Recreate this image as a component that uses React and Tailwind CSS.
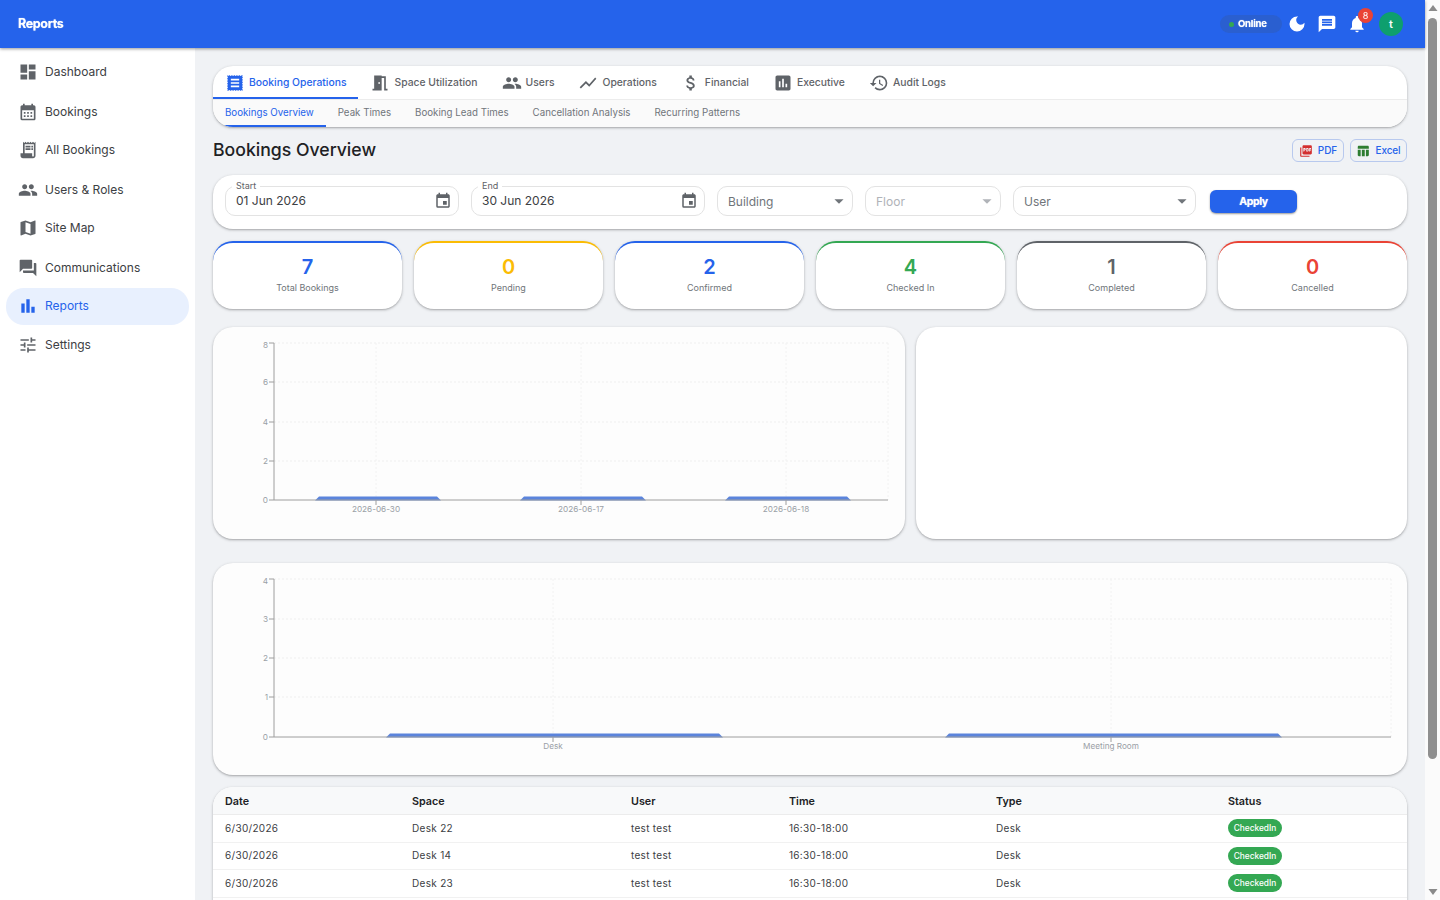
import React from 'react';
import {
  MdDashboard, MdCalendarMonth, MdReceiptLong, MdPeople, MdMap, MdForum, MdBarChart, MdTune,
  MdMeetingRoom, MdShowChart, MdAttachMoney, MdAssessment, MdHistory,
  MdPictureAsPdf, MdTableChart, MdEvent, MdArrowDropDown, MdDarkMode, MdMessage, MdNotifications,
} from 'react-icons/md';

const navItems = [
  { label: 'Dashboard', icon: MdDashboard, h: 'h-[38px]' },
  { label: 'Bookings', icon: MdCalendarMonth, h: 'h-[38px] mt-[2px]' },
  { label: 'All Bookings', icon: MdReceiptLong, h: 'h-[38px]' },
  { label: 'Users & Roles', icon: MdPeople, h: 'h-[38px] mt-[2px]' },
  { label: 'Site Map', icon: MdMap, h: 'h-[38px]' },
  { label: 'Communications', icon: MdForum, h: 'h-[38px] mt-[2px]' },
  { label: 'Reports', icon: MdBarChart, h: 'h-[37px] mt-[1px] pb-[1px]', active: true },
  { label: 'Settings', icon: MdTune, h: 'h-[38px] mt-[1px]' },
];

// filled sheet with three lines and a dotted edge
const SheetIcon = ({ size, className }) => (
  <svg width={size} height={size} viewBox="0 0 24 24" className={className} fill="currentColor">
    <path fillRule="evenodd" d="M3.5 3.5h17v17h-17z M7 7h10v2H7z M7 11h10v2H7z M7 15h10v2H7z" />
    <rect x="3" y="3" width="18" height="18" fill="none" stroke="currentColor" strokeWidth="1" strokeDasharray="1 1" />
  </svg>
);

const topTabs = [
  { label: 'Booking Operations', icon: SheetIcon, active: true },
  { label: 'Space Utilization', icon: MdMeetingRoom },
  { label: 'Users', icon: MdPeople },
  { label: 'Operations', icon: MdShowChart },
  { label: 'Financial', icon: MdAttachMoney },
  { label: 'Executive', icon: MdAssessment },
  { label: 'Audit Logs', icon: MdHistory },
];

const subTabs = ['Bookings Overview', 'Peak Times', 'Booking Lead Times', 'Cancellation Analysis', 'Recurring Patterns'];

const stats = [
  { value: 7, label: 'Total Bookings', border: 'border-t-[#2563eb]', text: 'text-[#2563eb]' },
  { value: 0, label: 'Pending', border: 'border-t-[#fbbc04]', text: 'text-[#fbbc04]' },
  { value: 2, label: 'Confirmed', border: 'border-t-[#2563eb]', text: 'text-[#2563eb]' },
  { value: 4, label: 'Checked In', border: 'border-t-[#34a853]', text: 'text-[#34a853]' },
  { value: 1, label: 'Completed', border: 'border-t-[#5f6368]', text: 'text-[#5f6368]' },
  { value: 0, label: 'Cancelled', border: 'border-t-[#ea4335]', text: 'text-[#ea4335]' },
];

const rows = [
  ['6/30/2026', 'Desk 22', 'test test', '16:30-18:00', 'Desk', 'CheckedIn'],
  ['6/30/2026', 'Desk 14', 'test test', '16:30-18:00', 'Desk', 'CheckedIn'],
  ['6/30/2026', 'Desk 23', 'test test', '16:30-18:00', 'Desk', 'CheckedIn'],
  ['6/30/2026', 'Desk 9', 'test test', '16:30-18:00', 'Desk', 'CheckedIn'],
  ['6/18/2026', 'Room 2', 'test test', '10:00-11:00', 'Meeting Room', 'Confirmed'],
  ['6/17/2026', 'Room 1', 'test test', '09:00-10:00', 'Meeting Room', 'Confirmed'],
  ['6/17/2026', 'Desk 5', 'test test', '09:00-17:00', 'Desk', 'Completed'],
];

const statusClass = {
  CheckedIn: 'bg-[#34a853]',
  Confirmed: 'bg-[#2563eb]',
  Completed: 'bg-[#5f6368]',
};

const Field = ({ label, value, className }) => (
  <div className={`relative h-[30px] rounded-[10px] border border-[#e3e3e3] flex items-center justify-between pl-[10px] pr-[6px] ${className}`}>
    <span className="absolute -top-[7px] left-[6px] bg-white px-[4px] text-[9px] leading-[11px] text-[#5f6368]">{label}</span>
    <span className="text-[12px] text-[#3c4043]">{value}</span>
    <MdEvent size={18} className="text-[#5f6368]" />
  </div>
);

const SelectBox = ({ label, className, muted }) => (
  <div className={`h-[30px] rounded-[10px] border border-[#e3e3e3] flex items-center justify-between pl-[10px] pr-[2px] ${className}`}>
    <span className={`pt-[1px] text-[12px] ${muted ? 'text-[#b0b3b8]' : 'text-[#70757a]'}`}>{label}</span>
    <MdArrowDropDown size={22} className={muted ? 'text-[#b0b3b8]' : 'text-[#70757a]'} />
  </div>
);

// recharts-like bar with the corners cut off
const Bar = ({ x, w, base }) => (
  <path d={`M${x} ${base + 0.5} L${x + 4} ${base - 3.5} H${x + w - 4} L${x + w} ${base + 0.5} Z`} fill="#5b84dc" />
);

const AxisText = ({ x, y, children, anchor = 'middle' }) => (
  <text x={x} y={y} textAnchor={anchor} fontSize="8.2" fill="#9aa0a6" fontFamily="Inter, sans-serif">{children}</text>
);

const TimeChart = () => {
  const ys = [[0, 173], [2, 134], [4, 95], [6, 55], [8, 16]];
  const xs = [[163, '2026-06-30', 102], [368, '2026-06-17', 307], [573, '2026-06-18', 512]];
  return (
    <svg width="692" height="212" className="block">
      {ys.slice(1).map(([v, y]) => (
        <line key={v} x1="61" x2="675" y1={y} y2={y} stroke="#efefef" strokeDasharray="2 2" />
      ))}
      {[163, 368, 573, 675].map((x) => (
        <line key={x} x1={x} x2={x} y1="16" y2="173" stroke="#f2f2f2" strokeDasharray="2 2" />
      ))}
      {xs.map(([x, , bx]) => <Bar key={x} x={bx} w={126} base={173} />)}
      <line x1="61" x2="61" y1="16" y2="173" stroke="#9e9e9e" />
      <line x1="61" x2="675" y1="173" y2="173" stroke="#9e9e9e" />
      {ys.map(([v, y]) => (
        <g key={v}>
          <line x1="56" x2="61" y1={y} y2={y} stroke="#9e9e9e" />
          <AxisText x={55} y={v === 8 ? y + 5 : y + 3} anchor="end">{v}</AxisText>
        </g>
      ))}
      {xs.map(([x, label]) => (
        <g key={label}>
          <line x1={x} x2={x} y1="173" y2="178" stroke="#9e9e9e" />
          <AxisText x={x} y={185}>{label}</AxisText>
        </g>
      ))}
    </svg>
  );
};

const TypeChart = () => {
  const ys = [[0, 174], [1, 134], [2, 95], [3, 56], [4, 16]];
  const xs = [[340, 'Desk', 173], [898, 'Meeting Room', 732]];
  return (
    <svg width="1194" height="212" className="block">
      {ys.slice(1).map(([v, y]) => (
        <line key={v} x1="61" x2="1178" y1={y} y2={y} stroke="#efefef" strokeDasharray="2 2" />
      ))}
      {[340, 898, 1178].map((x) => (
        <line key={x} x1={x} x2={x} y1="16" y2="174" stroke="#f2f2f2" strokeDasharray="2 2" />
      ))}
      {xs.map(([x, , bx]) => <Bar key={x} x={bx} w={337} base={174} />)}
      <line x1="61" x2="61" y1="16" y2="174" stroke="#9e9e9e" />
      <line x1="61" x2="1178" y1="174" y2="174" stroke="#9e9e9e" />
      {ys.map(([v, y]) => (
        <g key={v}>
          <line x1="56" x2="61" y1={y} y2={y} stroke="#9e9e9e" />
          <AxisText x={55} y={v === 4 ? y + 5 : y + 3} anchor="end">{v}</AxisText>
        </g>
      ))}
      {xs.map(([x, label]) => (
        <g key={label}>
          <line x1={x} x2={x} y1="174" y2="179" stroke="#9e9e9e" />
          <AxisText x={x} y={186}>{label}</AxisText>
        </g>
      ))}
    </svg>
  );
};

const Scrollbar = () => (
  <div className="fixed top-0 right-0 w-[15px] h-screen bg-[#fbfbfb] flex flex-col items-center justify-between py-[4px]">
    <svg width="10" height="8" viewBox="0 0 10 8" className="text-[#8a8a8a]"><path d="M5 1l4.5 6h-9z" fill="currentColor" /></svg>
    <div className="absolute top-[18px] left-[3px] w-[9px] h-[741px] rounded-full bg-[#8f8f8f]" />
    <svg width="10" height="8" viewBox="0 0 10 8" className="text-[#8a8a8a]"><path d="M5 7L.5 1h9z" fill="currentColor" /></svg>
  </div>
);

const cardShadow = 'shadow-[0_1px_2px_rgba(60,64,67,0.35),0_1px_3px_1px_rgba(60,64,67,0.08)]';
const softGlow = '[text-shadow:0_0_1px_rgba(255,255,255,0.7)]';

const App = () => {
  return (
    <div className="min-h-screen w-[1425px] bg-[#f0f2f5] font-['Inter',sans-serif] text-[#202124]">
      {/* Top bar */}
      <header className="h-[48px] bg-[#2563eb] flex items-center justify-between pl-[18px] pr-[22px] shadow-[0_1px_3px_rgba(0,0,0,0.4)] relative z-10">
        <span className={`pt-[1px] text-[12.5px] font-bold text-white tracking-[-0.35px] ${softGlow}`}>Reports</span>
        <div className="flex items-center">
          <div className="h-[18px] w-[62px] rounded-full bg-[#2a5fd0] flex items-center pl-[9px] gap-[4px]">
            <span className="w-[5px] h-[5px] rounded-full bg-[#34a853]" />
            <span className={`text-[9.5px] font-bold text-white tracking-[-0.2px] ${softGlow}`}>Online</span>
          </div>
          <MdDarkMode size={20} className="text-white ml-[5px]" />
          <MdMessage size={20} className="text-white ml-[10px]" />
          <div className="relative ml-[10px]">
            <MdNotifications size={20} className="text-white" />
            <span className="absolute -top-[6px] left-[11px] w-[15px] h-[15px] rounded-full bg-[#ea4335] text-white text-[9px] flex items-center justify-center">8</span>
          </div>
          <div className="ml-[12px] w-[24px] h-[24px] rounded-full bg-[#0e9f6e] text-white text-[11px] font-semibold flex items-center justify-center">t</div>
        </div>
      </header>

      <div className="flex">
        {/* Sidebar */}
        <aside className="w-[195px] shrink-0 bg-white pt-[5px] px-[6px] min-h-[852px]">
          {navItems.map(({ label, icon: Icon, h, active }) => (
            <div key={label} className={`flex items-center pl-[12px] gap-[7px] ${h} ${active ? 'rounded-[18px] bg-[#e8f0fe] text-[#2563eb]' : 'text-[#3c4043]'}`}>
              <Icon size={20} className={active ? 'text-[#2563eb]' : 'text-[#5f6368]'} />
              <span className="text-[12px]">{label}</span>
            </div>
          ))}
        </aside>

        {/* Main */}
        <main className="flex-1 min-w-0 pt-[18px] pl-[18px] pr-[18px] pb-[12px]">
          {/* Tabs */}
          <div className={`rounded-[20px] bg-white overflow-hidden ${cardShadow}`}>
            <div className="h-[34px] flex border-b border-[#ececec]">
              {topTabs.map(({ label, icon: Icon, active }) => (
                <div key={label} className={`flex items-center gap-[4px] px-[12px] pt-[2px] border-b-2 text-[10.35px] font-medium ${active ? 'text-[#2563eb] border-[#2563eb]' : 'text-[#5f6368] border-transparent'}`}>
                  <Icon size={20} className={active ? 'text-[#2563eb]' : 'text-[#5f6368]'} />
                  {label}
                </div>
              ))}
            </div>
            <div className="h-[27px] flex bg-[#fafafa]">
              {subTabs.map((t, i) => (
                <div key={t} className={`flex items-center px-[12px] pt-[2px] border-b-2 text-[9.72px] ${i === 0 ? 'text-[#2563eb] border-[#2563eb]' : 'text-[#70757a] border-transparent'}`}>{t}</div>
              ))}
            </div>
          </div>

          {/* Title row */}
          <div className="h-[48px] flex items-center justify-between">
            <h1 className="-mt-[1px] text-[17.65px] font-medium">Bookings Overview</h1>
            <div className="flex gap-[6px] -mt-[1px]">
              <div className="h-[23px] w-[52px] rounded-[6px] border border-[#b8c9ee] flex items-center justify-center gap-[5px] text-[10px] font-medium text-[#2563eb]">
                <MdPictureAsPdf size={14} className="text-[#d32f2f]" />PDF
              </div>
              <div className="h-[23px] w-[57px] rounded-[6px] border border-[#b8c9ee] flex items-center justify-center gap-[5px] text-[10px] tracking-[-0.1px] font-medium text-[#2563eb]">
                <MdTableChart size={14} className="text-[#2e7d32]" />Excel
              </div>
            </div>
          </div>

          {/* Filters */}
          <div className={`h-[54px] rounded-[20px] bg-white flex items-start pt-[11px] px-[12px] gap-[12px] ${cardShadow}`}>
            <Field label="Start" value="01 Jun 2026" className="w-[234px]" />
            <Field label="End" value="30 Jun 2026" className="w-[234px]" />
            <SelectBox label="Building" className="w-[136px]" />
            <SelectBox label="Floor" className="w-[136px]" muted />
            <SelectBox label="User" className="w-[183px]" />
            <button className={`ml-[2px] mt-[4px] w-[87px] h-[23px] rounded-[6px] bg-[#2563eb] text-white text-[10.5px] font-bold tracking-[-0.4px] shadow-[0_1px_2px_rgba(0,0,0,0.4)] ${softGlow}`}>Apply</button>
          </div>

          {/* Stat cards */}
          <div className="mt-[12px] grid grid-cols-6 gap-[12px]">
            {stats.map((s) => (
              <div key={s.label} className={`h-[68px] rounded-[20px] bg-white border-t-2 ${s.border} flex flex-col items-center pt-[12px] ${cardShadow}`}>
                <span className={`text-[20px] leading-[24px] font-semibold ${s.text}`}>{s.value}</span>
                <span className="mt-[3px] text-[9px] leading-[12px] text-[#70757a]">{s.label}</span>
              </div>
            ))}
          </div>

          {/* Charts */}
          <div className="mt-[18px] flex gap-[11px]">
            <div className={`w-[692px] h-[212px] rounded-[20px] bg-[#fdfdfd] overflow-hidden ${cardShadow}`}>
              <TimeChart />
            </div>
            <div className={`flex-1 h-[212px] rounded-[20px] bg-white ${cardShadow}`} />
          </div>
          <div className={`mt-[24px] h-[212px] rounded-[20px] bg-[#fdfdfd] overflow-hidden ${cardShadow}`}>
            <TypeChart />
          </div>

          {/* Table */}
          <div className={`mt-[12px] rounded-[20px] bg-white overflow-hidden ${cardShadow}`}>
            <table className="w-full table-fixed border-collapse text-left">
              <thead>
                <tr className="h-[27.5px] bg-[#f8f9fa] border-b border-[#ececec] text-[10.75px]">
                  <th className="w-[187px] pl-[12px] pt-[3px] font-semibold">Date</th>
                  <th className="w-[219px] pl-[12px] pt-[3px] font-semibold">Space</th>
                  <th className="w-[158px] pl-[12px] pt-[3px] font-semibold">User</th>
                  <th className="w-[207px] pl-[12px] pt-[3px] font-semibold">Time</th>
                  <th className="w-[232px] pl-[12px] pt-[3px] font-semibold">Type</th>
                  <th className="pl-[12px] pt-[3px] font-semibold">Status</th>
                </tr>
              </thead>
              <tbody>
                {rows.map((r, i) => (
                  <tr key={i} className="h-[27.5px] border-b border-[#f1f1f1] text-[10px] tracking-[0.3px] text-[#3c4043]">
                    {r.slice(0, 5).map((c, j) => (
                      <td key={j} className="pl-[12px]">{c}</td>
                    ))}
                    <td className="pl-[12px]">
                      <span className={`inline-flex items-center h-[18px] px-[5.75px] rounded-full text-white text-[8.3px] tracking-normal font-medium ${statusClass[r[5]]}`}>{r[5]}</span>
                    </td>
                  </tr>
                ))}
              </tbody>
            </table>
          </div>
        </main>
      </div>
      <Scrollbar />
    </div>
  );
};

export default App;
